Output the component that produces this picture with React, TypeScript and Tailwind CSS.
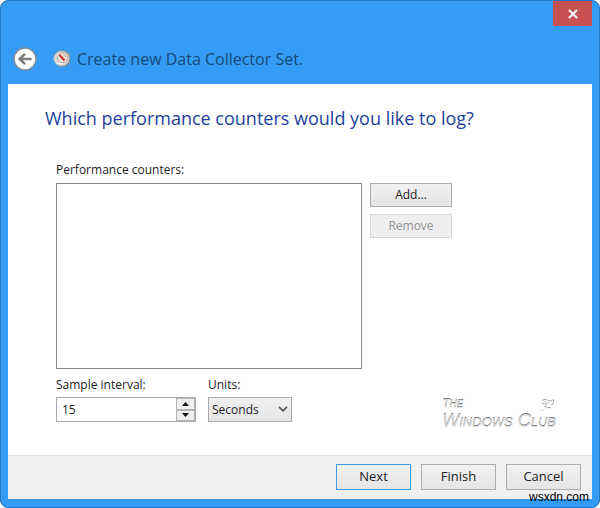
import { useState } from 'react'
import type { ButtonHTMLAttributes } from 'react'
import clsx from 'clsx'

function BackIcon() {
  return (
    <svg viewBox="0 0 24 24" className="size-6" aria-hidden="true">
      <circle cx="12" cy="12" r="11" fill="#fdfdfd" stroke="#7f8f9e" strokeWidth="1.4" />
      <path d="M18.5 12H7M12 6.8 6.6 12l5.4 5.2" fill="none" stroke="#7d7d7d" strokeWidth="2.5" />
    </svg>
  )
}

function GaugeIcon() {
  return (
    <svg viewBox="0 0 18 18" className="size-[18px]" aria-hidden="true">
      <path d="M5 1.5h9l3 3V13l-4 3.500H6z" fill="#8f9399" />
      <ellipse cx="8.5" cy="8.5" rx="7.8" ry="7.6" fill="#dcdad6" stroke="#aaa7a3" strokeWidth=".8" />
      <circle cx="9.5" cy="7.8" r="5" fill="#f1e8df" stroke="#b39a8c" strokeWidth=".9" />
      <path d="m6.5 5 5 5.5" stroke="#c62b22" strokeWidth="2" />
      <path d="m10.5 4.5 2.5 3" stroke="#d59a84" strokeWidth="1" />
      <path d="M4 13.500h6" stroke="#f6f6f6" strokeWidth="1.4" />
    </svg>
  )
}

function ClubLogo() {
  return (
    <div className="relative font-['Liberation_Sans',sans-serif] text-[#dcdcdc] italic [text-shadow:0_-1px_0_#777777]">
      <div className="text-[12px] leading-[14px]">
        T<span className="text-[10px]">HE</span>
      </div>
      <div className="text-[18px] leading-[18px] whitespace-nowrap">
        W<span className="text-[13px]">INDOWS</span> C<span className="text-[13px]">LUB</span>
      </div>
      <svg viewBox="0 0 16 16" className="absolute top-0 right-0 size-4" fill="none" aria-hidden="true">
        <path d="M2 3.5q3-2 5.500-.5M8 3.5q3 1 5.500-1M2 7q2.500-1.500 5 0M13.5 3q.5 3-2 5.500M6.5 7.5 5.5 10M6 11q3-1.500 5 0" stroke="#a6a6a6" />
        <path d="M0 13q3 1 4-1M1 5q3-2 5 0t6-1M8 7q2 1 4 0" stroke="#dddddd" />
      </svg>
    </div>
  )
}

function DialogButton({ className, ...props }: ButtonHTMLAttributes<HTMLButtonElement>) {
  return (
    <button
      type="button"
      className={clsx(
        'border bg-linear-to-b from-[#f1f1f1] to-[#e5e5e5] text-[#222222]',
        'disabled:border-[#d5d5d5] disabled:from-[#efefef] disabled:to-[#efefef] disabled:text-[#929292]',
        className,
      )}
      {...props}
    />
  )
}

export default function App() {
  const [interval, setInterval] = useState(15)

  return (
    <div className="relative flex min-h-screen flex-col rounded-lg border border-[#2178c4] bg-[#359cf5] px-[7px] pb-2 font-['Open_Sans',sans-serif] text-[12px] text-[#222222]">
      <header className="pb-3">
        <div className="flex justify-end">
          <button
            type="button"
            aria-label="Close"
            className="flex h-[25px] w-[39px] items-center justify-center bg-[#c75050]"
          >
            <svg viewBox="0 0 10 10" className="size-[10px]" aria-hidden="true">
              <path d="m1 1 8 8M9 1 1 9" stroke="#fff" strokeWidth="2" />
            </svg>
          </button>
        </div>
        <div className="mt-5 flex items-center pl-[5px]">
          <button type="button" aria-label="Back">
            <BackIcon />
          </button>
          <div className="ml-4">
            <GaugeIcon />
          </div>
          <h1 className="ml-1.5 text-[16px] leading-[26px] text-[#164a78]">
            Create new Data Collector Set.
          </h1>
        </div>
      </header>

      <main className="flex grow flex-col bg-white pr-9 pl-[37px]">
        <h2 className="mt-5 text-[18px] leading-7 text-[#1e3f9c]">
          Which performance counters would you like to log?
        </h2>

        <div className="mt-[30px] pr-[104px] pl-[11px]">
          <label htmlFor="counters" className="block leading-4">
            Performance counters:
          </label>
          <div className="mt-[5px] flex gap-2">
            <select
              id="counters"
              size={8}
              className="h-[186px] min-w-0 grow border border-[#8b8d93] bg-white"
            />
            <div className="flex w-[82px] flex-col gap-[7px]">
              <DialogButton className="h-6 border-[#adadad]">Add...</DialogButton>
              <DialogButton className="h-6" disabled>
                Remove
              </DialogButton>
            </div>
          </div>
        </div>

        <div className="mt-2 flex justify-between pb-5 pl-[11px]">
          <div className="flex gap-3">
            <div>
              <label htmlFor="interval" className="block leading-4">
                Sample interval:
              </label>
              <div className="mt-1 flex h-[25px] w-[140px] border border-[#ababab] bg-white">
                <input
                  id="interval"
                  type="text"
                  inputMode="numeric"
                  value={interval}
                  onChange={(e) => setInterval(Number(e.target.value) || 0)}
                  className="min-w-0 grow px-[5px] outline-none"
                />
                <div className="flex w-[19px] shrink-0 flex-col">
                  <button
                    type="button"
                    aria-label="Increase"
                    onClick={() => setInterval(interval + 1)}
                    className="flex grow items-center justify-center border border-[#b5b5b5] bg-[#eeeeee]"
                  >
                    <svg viewBox="0 0 7 4" className="h-1 w-[7px]" aria-hidden="true">
                      <path d="M0 4 3.5 0 7 4z" fill="#111" />
                    </svg>
                  </button>
                  <button
                    type="button"
                    aria-label="Decrease"
                    onClick={() => setInterval(Math.max(1, interval - 1))}
                    className="flex grow items-center justify-center border border-[#b5b5b5] bg-[#eeeeee]"
                  >
                    <svg viewBox="0 0 7 4" className="h-1 w-[7px]" aria-hidden="true">
                      <path d="M0 0h7L3.5 4z" fill="#111" />
                    </svg>
                  </button>
                </div>
              </div>
            </div>

            <div>
              <label htmlFor="units" className="block leading-4">
                Units:
              </label>
              <div className="relative mt-1">
                <select
                  id="units"
                  className="h-[25px] w-[84px] appearance-none border border-[#ababab] bg-linear-to-b from-[#f1f1f1] to-[#e5e5e5] pl-[3px]"
                >
                  <option>Seconds</option>
                  <option>Minutes</option>
                  <option>Hours</option>
                  <option>Days</option>
                  <option>Weeks</option>
                </select>
                <svg
                  viewBox="0 0 10 6"
                  className="pointer-events-none absolute top-[9px] right-1 h-1.5 w-[10px]"
                  aria-hidden="true"
                >
                  <path d="m1 .8 4 4 4-4" fill="none" stroke="#555" strokeWidth="1.7" />
                </svg>
              </div>
            </div>
          </div>

          <div className="pt-5">
            <ClubLogo />
          </div>
        </div>
      </main>

      <footer className="flex justify-end gap-[10px] border-t border-[#dfdfdf] bg-[#f0f0f0] px-[11px] pt-2 pb-[9px] text-[13px]">
        <DialogButton className="h-[26px] w-[75px] border-[#3c9df0]">Next</DialogButton>
        <DialogButton className="h-[26px] w-[75px] border-[#adadad]">Finish</DialogButton>
        <DialogButton className="h-[26px] w-[75px] border-[#adadad]">Cancel</DialogButton>
      </footer>

      <span className="absolute right-[10px] bottom-0.5 font-['Liberation_Sans',sans-serif] text-[12px] leading-4 text-black">
        wsxdn.com
      </span>
    </div>
  )
}
